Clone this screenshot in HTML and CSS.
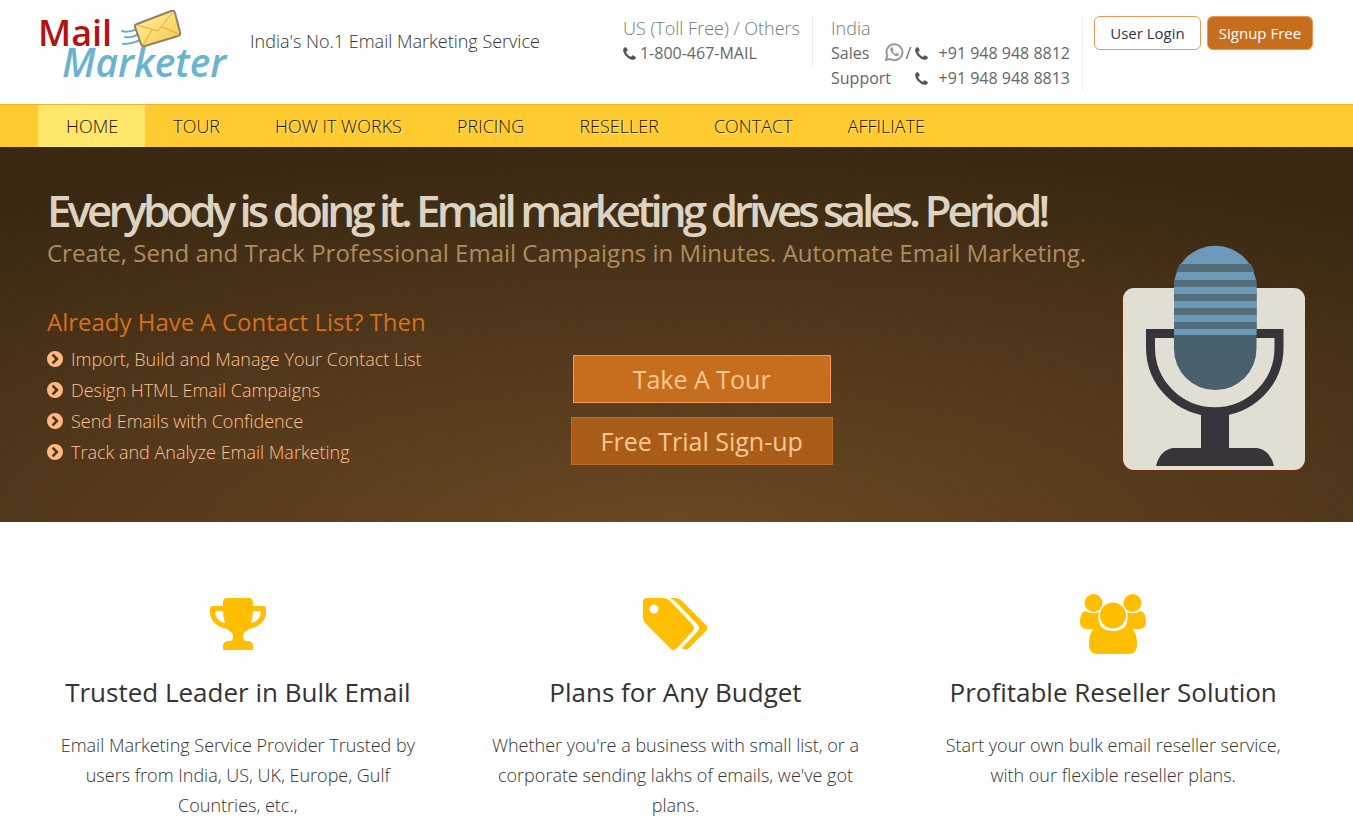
FILE: index.html
```html
<!DOCTYPE html>
<html lang="en">
<head>
  <meta charset="UTF-8">
  <meta name="viewport" content="width=device-width, initial-scale=1.0">
  <title>Mail Marketer - India's No.1 Email Marketing Service</title>
  <link rel="stylesheet" href="styles.css">
</head>
<body>

<!-- shared icons -->
<svg class="sprite" aria-hidden="true">
  <symbol id="phone" viewBox="0 0 1408 1664">
    <path d="M1408 1240q0 27-10 70.5T1377 1379q-21 50-122 106-94 51-186 51-27 0-52.500-3.500T960 1520t-47.500-14.500T857 1485t-49-18q-98-35-175-83-128-79-264.500-215.500T153 904q-48-77-83-175-3-9-18-49t-20.500-55.500T17 577 3.500 519.500 0 467q0-92 51-186Q107 180 157 159q25-11 68.500-21t70.500-10q14 0 21 3 18 6 53 76 11 19 30 54t35 63.500 31 53.500q3 4 17.500 25t21.500 35.500 7 28.500q0 20-28.500 50T416 572t-62 53-28.500 46q0 9 5 22.500t8.500 20.500 14 24 11.500 19q76 137 174 235t235 174q2 1 19 11.500t24 14 20.500 8.500 22.500 5q18 0 46-28.500t53-62 55-62T1065 1024q14 0 28.500 7t35.500 21.500 25 17.500q25 15 53.500 31t63.500 35 54 30q70 35 76 53 3 7 3 21z"/>
  </symbol>
  <symbol id="chevron" viewBox="0 0 16 16">
    <path fill-rule="evenodd" d="M8 0a8 8 0 1 1 0 16A8 8 0 0 1 8 0zM6.500 2.800 4.700 4.600 8.100 8l-3.400 3.400 1.800 1.800L11.700 8z"/>
  </symbol>
</svg>

<header class="top">
  <a class="logo" href="#" aria-label="Mail Marketer">
    <svg width="192" height="84" viewBox="0 0 192 84">
      <defs>
        <linearGradient id="paper" x1="0" y1="0" x2="1" y2="1">
          <stop offset="0" stop-color="#fff0a8"/>
          <stop offset="1" stop-color="#f8c845"/>
        </linearGradient>
      </defs>
      <text class="logo-mail" x="0" y="37">Mail</text>
      <text class="logo-marketer" x="24" y="68">Marketer</text>
      <g fill="none" stroke="#69aeca" stroke-width="2" stroke-linecap="round">
        <path d="M84 22c5 2 9 0 13-1M87 28c5 1 8 0 12-2M85 35c7 0 11-1 17-4"/>
      </g>
      <path d="M99 15 133 2q3-1 4 2l5 19q1 3-2 4l-33 10q-3 1-4-2l-6-17q-1-2 2-3z" fill="url(#paper)" stroke="#8f8266" stroke-width="2"/>
      <path d="M99 16l21 6 14-18M105 36l9-15M141 25l-17-7" fill="none" stroke="#e2a93a" stroke-width="1"/>
    </svg>
  </a>
  <p class="tagline">India's No.1 Email Marketing Service</p>

  <div class="contact">
    <h2>US (Toll Free) / Others</h2>
    <p><svg class="phone"><use href="#phone"/></svg>1-800-467-MAIL</p>
  </div>
  <div class="contact contact-india">
    <h2>India</h2>
    <p>
      <span>Sales</span>
      <span class="number">
        <svg class="whatsapp" viewBox="0 0 20 20">
          <path d="M2 18l1.300-4.300A8 8 0 1 1 6.300 17z" fill="none" stroke="#969a96" stroke-width="2"/>
          <path d="M7.300 5.300c-1.600 1-1.500 3.200.8 5.900s5 3.800 6.600 2.100l.3-1.200-2.300-1.200-1.200 1.100c-1.300-.5-2.400-1.600-2.900-2.900l.9-1-.9-2.500z" fill="#969a96"/>
        </svg>/<svg class="phone"><use href="#phone"/></svg> +91 948 948 8812
      </span>
    </p>
    <p>
      <span>Support</span>
      <span class="number"><svg class="phone"><use href="#phone"/></svg> +91 948 948 8813</span>
    </p>
  </div>

  <div class="account">
    <a class="btn btn-login" href="#">User Login</a>
    <a class="btn btn-signup" href="#">Signup Free</a>
  </div>
</header>

<nav class="menu">
  <ul>
    <li><a class="active" href="#">HOME</a></li>
    <li><a href="#">TOUR</a></li>
    <li><a href="#">HOW IT WORKS</a></li>
    <li><a href="#">PRICING</a></li>
    <li><a href="#">RESELLER</a></li>
    <li><a href="#">CONTACT</a></li>
    <li><a href="#">AFFILIATE</a></li>
  </ul>
</nav>

<section class="hero">
  <div class="hero-text">
    <h1>Everybody is doing it. Email marketing drives sales. Period!</h1>
    <p class="lead">Create, Send and Track Professional Email Campaigns in Minutes. Automate Email Marketing.</p>
    <div class="hero-row">
      <div class="steps">
        <h2>Already Have A Contact List? Then</h2>
        <ul>
          <li><svg><use href="#chevron"/></svg>Import, Build and Manage Your Contact List</li>
          <li><svg><use href="#chevron"/></svg>Design HTML Email Campaigns</li>
          <li><svg><use href="#chevron"/></svg>Send Emails with Confidence</li>
          <li><svg><use href="#chevron"/></svg>Track and Analyze Email Marketing</li>
        </ul>
      </div>
      <div class="cta">
        <a class="cta-tour" href="#">Take A Tour</a>
        <a class="cta-trial" href="#">Free Trial Sign-up</a>
      </div>
    </div>
  </div>
  <svg class="mic" width="185" height="228" viewBox="0 0 185 228" aria-hidden="true">
    <rect x="1" y="45" width="183" height="182" rx="11" fill="#69320f"/>
    <rect x="2" y="43" width="182" height="182" rx="11" fill="#e1dfd3"/>
    <path d="M29.500 88.500h128.500v14a64.200 64.200 0 0 1-128.500 0z" fill="none" stroke="#383439" stroke-width="9"/>
    <path d="M80 168h28v35h28q13 2 17 18H35q4-16 17-18h28z" fill="#383439"/>
    <rect x="53" y="1" width="82.500" height="144" rx="41" fill="#48616c"/>
    <path d="M53 90V42a41 41 0 0 1 82.500 0v48z" fill="#6b99ba"/>
    <path d="M58.500 19H130l3.500 8H55.500zM53 35h82.500v7H53zM53 49h82.500v7H53zM53 63h82.500v7H53zM53 77h82.500v7H53z" fill="#526c79"/>
  </svg>
</section>

<section class="features">
  <article>
    <svg width="56" height="52" viewBox="0 0 56 52">
      <path fill-rule="evenodd" d="M17 0h22q4 0 4 5v3h10q3 0 3 3v3c0 9-7 15-17 17-2 2-6 3-6 7 0 3 1 5 4 5 4 0 6 2 6 5v4H13v-4c0-3 2-5 6-5 3 0 4-2 4-5 0-4-4-5-6-7C7 29 0 23 0 14v-3q0-3 3-3h10V5q0-5 4-5zM13 13H5c0 6 4 11 10 12q-2-6-2-12zm30 0q0 6-2 12c6-1 10-6 10-12z"/>
    </svg>
    <h2>Trusted Leader in Bulk Email</h2>
    <p>Email Marketing Service Provider Trusted by users from India, US, UK, Europe, Gulf Countries, etc.,</p>
  </article>
  <article>
    <svg width="64" height="52" viewBox="0 0 64 52">
      <path fill-rule="evenodd" d="M4 0h16q4 0 7 3l22 23q4 4 0 8L34 50q-4 4-7 0L3 26q-3-3-3-6V4q0-4 4-4zM11 6.500a4.500 4.500 0 1 0 0 9 4.500 4.500 0 0 0 0-9z"/>
      <path d="M26 0h6q4 0 7 3l24 24q3 3 0 6L46 50q-4 3-7 0l15-16q4-4 0-8L32 3q-2-2-6-3z"/>
    </svg>
    <h2>Plans for Any Budget</h2>
    <p>Whether you're a business with small list, or a corporate sending lakhs of emails, we've got plans.</p>
  </article>
  <article>
    <svg class="users" width="66" height="62" viewBox="0 0 66 62">
      <circle cx="13.500" cy="10" r="9"/>
      <circle cx="52.500" cy="10" r="9"/>
      <path d="M5 18q8 4 14 1-2 8 2 15-4 1-6 2H7q-7 0-7-7 0-9 5-11zM61 18q-8 4-14 1 2 8-2 15 4 1 6 2h8q7 0 7-7 0-9-5-11z"/>
      <circle cx="33" cy="22.500" r="13"/>
      <path d="M20 33q5 5 13 5t13-5q11 1 11 19 0 9-9 9H18q-9 0-9-9 0-18 11-19z"/>
    </svg>
    <h2>Profitable Reseller Solution</h2>
    <p>Start your own bulk email reseller service, with our flexible reseller plans.</p>
  </article>
</section>

</body>
</html>
```
FILE: styles.css
```css
* {
  box-sizing: border-box;
}
body {
  margin: 0;
  font-family: 'Open Sans', sans-serif;
  font-size: 18px;
  font-weight: 300;
  color: #333;
  background: #fff;
}
h1, h2, p, ul {
  margin: 0;
  padding: 0;
  font-weight: inherit;
}
ul {
  list-style: none;
}
a {
  text-decoration: none;
  color: inherit;
}
.sprite {
  display: none;
}

/* header */
.top {
  display: flex;
  align-items: flex-start;
  height: 104px;
  padding: 0 40px 0 38px;
}
.logo svg {
  display: block;
  margin-top: 9px;
}
.logo-mail {
  font: 600 36px 'Open Sans', sans-serif;
  fill: #b11313;
}
.logo-marketer {
  font: italic 600 39px 'Open Sans', sans-serif;
  fill: #6bb3d0;
}
.tagline {
  margin: 28px auto 0 20px;
  line-height: 26px;
}
.contact {
  margin-top: 16px;
  padding-right: 12px;
  border-right: 1px solid #eee;
  font-size: 16px;
  font-weight: 400;
  line-height: 25px;
  color: #666;
}
.contact h2 {
  font-size: 18px;
  font-weight: 300;
  line-height: 25px;
  color: #747c74;
}
.contact-india {
  width: 270px;
  padding-left: 18px;
}
.contact-india p {
  display: flex;
  justify-content: space-between;
}
.number {
  white-space: nowrap;
}
.phone {
  width: 13px;
  height: 15px;
  margin-right: 4px;
  vertical-align: -2px;
  fill: #555;
}
.whatsapp {
  width: 20px;
  height: 20px;
  margin-right: 2px;
  vertical-align: -3px;
}
.number .phone {
  margin: 0 6px 0 4px;
}
.account {
  display: flex;
  gap: 6px;
  margin: 16px 0 0 11px;
}
.btn {
  height: 34px;
  border: 1px solid #f0984f;
  border-radius: 6px;
  font-size: 15px;
  font-weight: 400;
  line-height: 33px;
  text-align: center;
}
.btn-login {
  width: 107px;
  color: #334;
}
.btn-signup {
  width: 106px;
  background: #c66e1e;
  color: #fff;
}

/* menu */
.menu {
  padding: 0 38px;
  background: #ffcb31;
  border-top: 1px solid #f3b62b;
}
.menu ul {
  display: flex;
}
.menu a {
  display: block;
  padding: 0 27px 0 28px;
  line-height: 42px;
  color: #221100;
  text-shadow: 1px 1px 0 #ffe997;
}
.menu .active {
  background: #ffe76c;
}

/* hero */
.hero {
  display: flex;
  justify-content: space-between;
  align-items: flex-start;
  min-height: 375px;
  padding: 36px 47px;
  background:
    repeating-linear-gradient(135deg, rgba(0,0,0,0.04) 0, rgba(0,0,0,0.04) 1px, transparent 1px, transparent 4px),
    radial-gradient(ellipse 90% 105% at 50% 105%, #6d4a22, #54391c 50%, #3a2912);
}
.hero h1 {
  font-size: 44px;
  font-weight: 600;
  line-height: 54px;
  letter-spacing: -4px;
  white-space: nowrap;
  color: #ddd3c3;
}
.lead {
  font-size: 24px;
  font-weight: 400;
  line-height: 32px;
  color: #ad8c62;
}
.hero-text {
  flex: 1;
}
.hero-row {
  display: flex;
  margin-top: 32px;
}
.steps {
  width: 48%;
}
.steps h2 {
  font-size: 24px;
  font-weight: 400;
  line-height: 42px;
  color: #d5701d;
}
.steps li {
  display: flex;
  align-items: center;
  gap: 8px;
  padding-top: 1px;
  line-height: 30px;
  color: #ffc08f;
}
.steps svg {
  width: 16px;
  height: 16px;
  fill: #ffb883;
}
.cta {
  display: flex;
  flex-direction: column;
  align-items: center;
  gap: 14px;
  margin: 54px 0 0 8px;
}
.cta a {
  padding: 0 29px;
  border: 1px solid #c36a1a;
  background: #a95d19;
  font-size: 25px;
  font-weight: 400;
  line-height: 46px;
  color: #ffc891;
}
.cta .cta-tour {
  padding: 0 59px;
  border-color: #f49a51;
  background: #c66e1e;
}
.mic {
  flex: none;
  margin-top: 62px;
}

/* features */
.features {
  display: grid;
  grid-template-columns: repeat(3, 1fr);
  padding: 70px 21px 20px 19px;
  text-align: center;
}
.features article {
  padding: 0 33px;
}
.features svg {
  margin: 6px 0;
  vertical-align: top;
  fill: #ffbf00;
}
.features .users {
  margin: 1px 0;
}
.features h2 {
  margin: 16px 0 18px;
  font-size: 26px;
  font-weight: 400;
  line-height: 40px;
}
.features p {
  line-height: 30px;
}
```
